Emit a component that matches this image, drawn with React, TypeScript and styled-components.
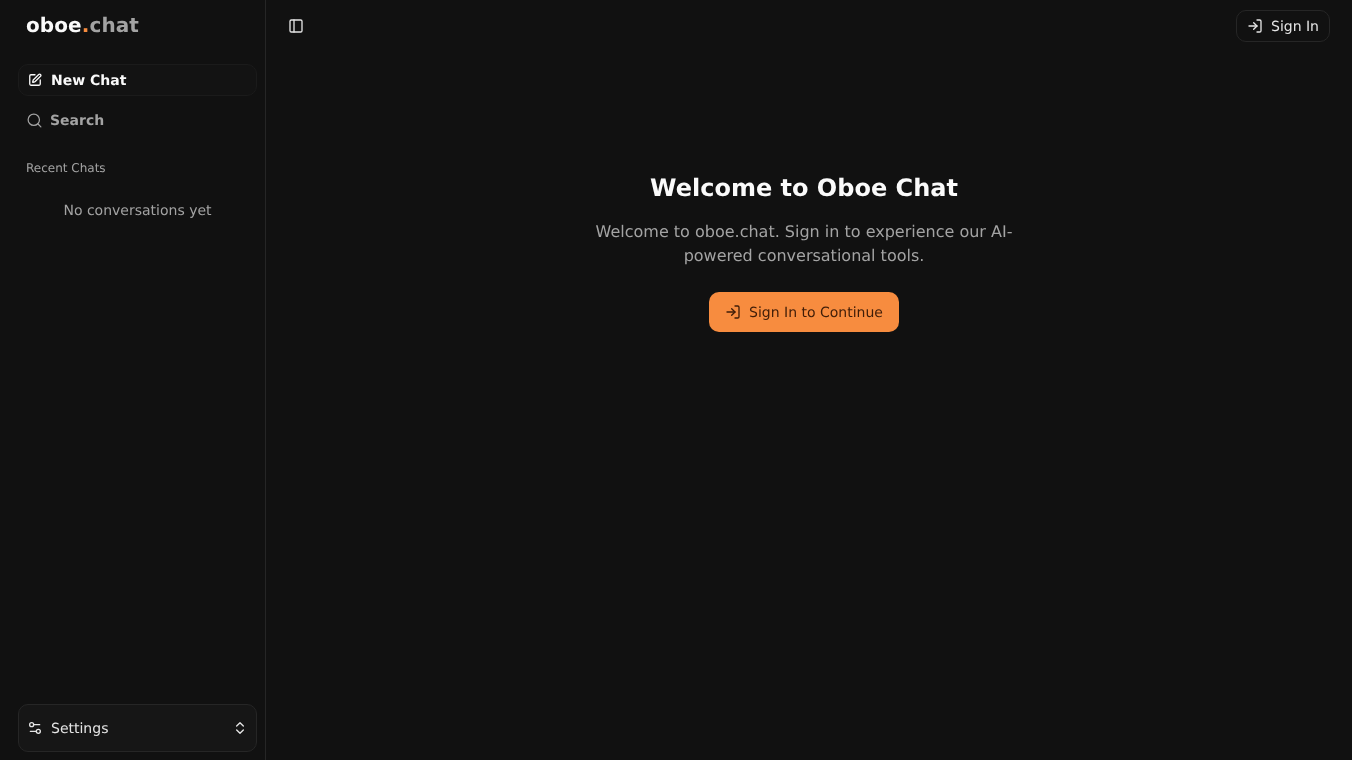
import React from "react";
import styled, { createGlobalStyle } from "styled-components";
import { SquarePen, Search, PanelLeft, LogIn, Settings2, ChevronsUpDown } from "lucide-react";

const Global = createGlobalStyle`
  html, body { margin: 0; padding: 0; height: 100%; background: #111111; }
  body {
    font-family: "DejaVu Sans", sans-serif;
    color: #fafafa;
    text-rendering: geometricPrecision;
    -webkit-font-smoothing: antialiased;
  }
  #root { height: 100%; }
  * { box-sizing: border-box; }
  button { text-rendering: geometricPrecision; }
`;

const Shell = styled.div`
  display: flex;
  height: 760px;
  background: #111111;
`;

const Sidebar = styled.aside`
  width: 266px;
  flex: none;
  display: flex;
  flex-direction: column;
  border-right: 1px solid #262626;
  padding: 0 8px 8px 18px;
  will-change: transform;
`;

const Logo = styled.div`
  height: 52px;
  padding-left: 8px;
  font-size: 20px;
  line-height: 50px;
  font-weight: 700;
  letter-spacing: 0.1px;
  color: #fafafa;
`;

const LogoDot = styled.span`
  color: #f78c3f;
`;

const LogoMuted = styled.span`
  color: #a3a3a3;
`;

const Label = styled.span`
  padding-top: 1px;
`;

const NewChat = styled.button`
  margin-top: 12px;
  height: 32px;
  width: 239px;
  display: flex;
  align-items: center;
  gap: 9px;
  padding: 0 9px;
  border: 1px solid #1b1b1b;
  border-radius: 10px;
  background: #131313;
  color: #fafafa;
  font: 700 14px "DejaVu Sans", sans-serif;
`;

const SearchRow = styled.div`
  margin-top: 8px;
  height: 32px;
  display: flex;
  align-items: center;
  gap: 7px;
  padding-left: 8px;
  color: #a3a3a3;
  font-size: 14px;
  font-weight: 700;
`;

const SectionLabel = styled.div`
  margin-top: 24px;
  padding-left: 8px;
  font-size: 12px;
  line-height: 16px;
  color: #a3a3a3;
`;

const Empty = styled.div`
  margin-top: 25px;
  width: 239px;
  text-align: center;
  font-size: 14px;
  line-height: 20px;
  color: #a3a3a3;
`;

const SettingsButton = styled.button`
  margin-top: auto;
  width: 239px;
  height: 48px;
  display: flex;
  align-items: center;
  gap: 8px;
  padding: 0 8px;
  border: 1px solid #262626;
  border-radius: 10px;
  background: #161616;
  color: #e5e5e5;
  font: 400 14px "DejaVu Sans", sans-serif;
`;

const SettingsEnd = styled(ChevronsUpDown)`
  margin-left: auto;
`;

const Main = styled.main`
  flex: 1;
  display: flex;
  flex-direction: column;
  min-width: 0;
  will-change: transform;
`;

const TopBar = styled.header`
  height: 52px;
  display: flex;
  align-items: center;
  justify-content: space-between;
  padding: 0 22px;
`;

const ToggleIcon = styled(PanelLeft)`
  color: #e5e5e5;
`;

const SignIn = styled.button`
  height: 32px;
  width: 94px;
  display: flex;
  align-items: center;
  gap: 8px;
  padding: 0 10px;
  border: 1px solid #262626;
  border-radius: 10px;
  background: #111111;
  color: #e5e5e5;
  font: 400 14px "DejaVu Sans", sans-serif;
`;

const Hero = styled.section`
  display: flex;
  flex-direction: column;
  align-items: center;
  padding: 120px 10px 0 0;
`;

const Title = styled.h1`
  margin: 0;
  font-size: 24px;
  line-height: 32px;
  font-weight: 700;
  color: #fafafa;
`;

const Lead = styled.p`
  margin: 16px 0 0;
  width: 448px;
  text-align: center;
  font-size: 16px;
  line-height: 24px;
  color: #a3a3a3;
`;

const Cta = styled.button`
  margin-top: 24px;
  height: 40px;
  display: flex;
  align-items: center;
  gap: 8px;
  padding: 0 16px;
  border: none;
  border-radius: 10px;
  background: #f78c3f;
  color: #3f1d08;
  font: 400 14px "DejaVu Sans", sans-serif;
`;

export default function App() {
  return (
    <Shell>
      <Global />
      <Sidebar>
        <Logo>
          oboe<LogoDot>.</LogoDot>
          <LogoMuted>chat</LogoMuted>
        </Logo>
        <NewChat>
          <SquarePen size={14} strokeWidth={2.25} />
          <Label>New Chat</Label>
        </NewChat>
        <SearchRow>
          <Search size={17} strokeWidth={1.75} />
          <Label>Search</Label>
        </SearchRow>
        <SectionLabel>Recent Chats</SectionLabel>
        <Empty>No conversations yet</Empty>
        <SettingsButton>
          <Settings2 size={16} strokeWidth={2} />
          <Label>Settings</Label>
          <SettingsEnd size={16} strokeWidth={2} />
        </SettingsButton>
      </Sidebar>
      <Main>
        <TopBar>
          <ToggleIcon size={16} strokeWidth={2} />
          <SignIn>
            <LogIn size={16} strokeWidth={2} />
            <Label>Sign In</Label>
          </SignIn>
        </TopBar>
        <Hero>
          <Title>Welcome to Oboe Chat</Title>
          <Lead>Welcome to oboe.chat. Sign in to experience our AI-powered conversational tools.</Lead>
          <Cta>
            <LogIn size={16} strokeWidth={2} />
            <Label>Sign In to Continue</Label>
          </Cta>
        </Hero>
      </Main>
    </Shell>
  );
}
